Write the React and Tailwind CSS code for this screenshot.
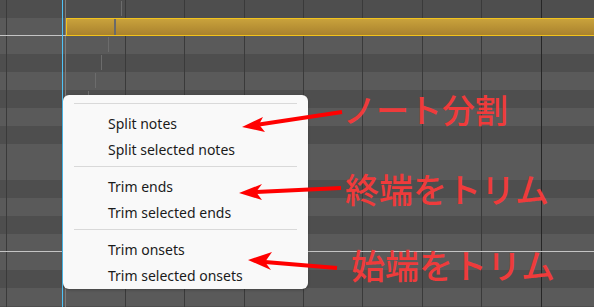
// C# C B A# A G# G F# F E D# D C# C B A# A G#  (0 = dark key row)
const keyRows = [0, 1, 1, 0, 1, 0, 1, 0, 1, 1, 0, 1, 0, 1, 1, 0, 1, 0];

const beats = ['#3a3a3a', '#7c7c7c', '#3a3a3a', '#3a3a3a', '#3a3a3a', '#3a3a3a', '#3a3a3a', '#3a3a3a', '#3a3a3a', '#262626'];

const marks = [
  { x: 121, y: 1, h: 15 },
  { x: 108, y: 37, h: 15 },
  { x: 101, y: 55, h: 15 },
  { x: 95, y: 73, h: 15 },
  { x: 88, y: 91, h: 6 },
];

const menuGroups = [
  ['Split notes', 'Split selected notes'],
  ['Trim ends', 'Trim selected ends'],
  ['Trim onsets', 'Trim selected onsets'],
];

function Arrow({ tail, tip, up, low, notch }) {
  return (
    <g fill="#ff0000">
      <line x1={tail[0]} y1={tail[1]} x2={notch[0]} y2={notch[1]} stroke="#ff0000" strokeWidth="4" />
      <polygon points={`${tip.join(',')} ${up.join(',')} ${notch.join(',')} ${low.join(',')}`} />
    </g>
  );
}

export default function App() {
  return (
    <div className="relative w-[594px] h-[307px] overflow-hidden bg-[#4d4d4d] font-['Noto_Sans','Liberation_Sans',sans-serif]">
      {/* key rows */}
      <div className="flex flex-col">
        {keyRows.map((k, i) => (
          <div key={i} className={`h-[18px] shrink-0 ${k ? 'bg-[#5a5a5a]' : 'bg-[#4e4e4e]'}`} />
        ))}
      </div>

      {/* beat lines */}
      <div className="absolute inset-0 flex pl-[6px]">
        {beats.map((c, i) => (
          <div key={i} className="w-[59.4px] shrink-0 h-full border-l" style={{ borderColor: c }} />
        ))}
      </div>

      {/* faint pitch marks */}
      {marks.map((m, i) => (
        <div key={i} className="absolute w-px bg-[#6c6c6c]" style={{ left: m.x, top: m.y, height: m.h }} />
      ))}

      {/* octave lines */}
      <div className="absolute left-0 right-0 top-[35px] h-px bg-[#c4c4c4]" />
      <div className="absolute left-0 right-0 top-[251px] h-px bg-[#c4c4c4]" />

      {/* note */}
      <div className="absolute left-[66px] top-[18px] h-[18px] w-[540px] border border-[#f2c31c] bg-gradient-to-b from-[#c9a23c] to-[#a9822e]">
        <div className="absolute left-[47px] top-0 bottom-0 w-[2px] bg-[#6a6a6a]" />
      </div>

      {/* playhead */}
      <div className="absolute top-0 bottom-0 left-[62px] w-px bg-[#4fc3f7]" />

      {/* context menu */}
      <div className="absolute left-[63px] top-[95px] w-[245px] h-[194px] rounded-md bg-[#f9f9f9] shadow-[0_1px_3px_rgba(0,0,0,0.25)] pt-1">
        {menuGroups.map((group, gi) => (
          <div key={gi}>
            <div className="mx-[11px] mt-1 mb-[6px] h-px bg-[#d9d9d9]" />
            {group.map((label) => (
              <div key={label} className="h-[26px] flex items-center pl-[45px] text-[14px] text-[#1b1b1b]">
                {label}
              </div>
            ))}
          </div>
        ))}
      </div>

      {/* arrows */}
      <svg className="absolute inset-0" width="594" height="307">
        <Arrow tail={[342, 112]} tip={[242, 127]} up={[263, 117]} low={[265, 132]} notch={[259, 124.5]} />
        <Arrow tail={[341, 188]} tip={[239, 193]} up={[262, 184]} low={[262, 200]} notch={[256, 192]} />
        <Arrow tail={[337, 268]} tip={[248, 260]} up={[272, 252]} low={[271, 270]} notch={[265, 262]} />
      </svg>

      {/* annotations */}
      <div className="absolute left-[343px] top-[88px] text-[33px] leading-[42px] font-medium text-[#ef3b3b] font-['Noto_Sans_CJK_JP',sans-serif]">
        ノート分割
      </div>
      <div className="absolute left-[345px] top-[168px] text-[34px] leading-[42px] font-medium text-[#ef3b3b] font-['Noto_Sans_CJK_JP',sans-serif]">
        終端をトリム
      </div>
      <div className="absolute left-[351px] top-[244px] text-[34px] leading-[42px] font-medium text-[#ef3b3b] font-['Noto_Sans_CJK_JP',sans-serif]">
        始端をトリム
      </div>
    </div>
  );
}
